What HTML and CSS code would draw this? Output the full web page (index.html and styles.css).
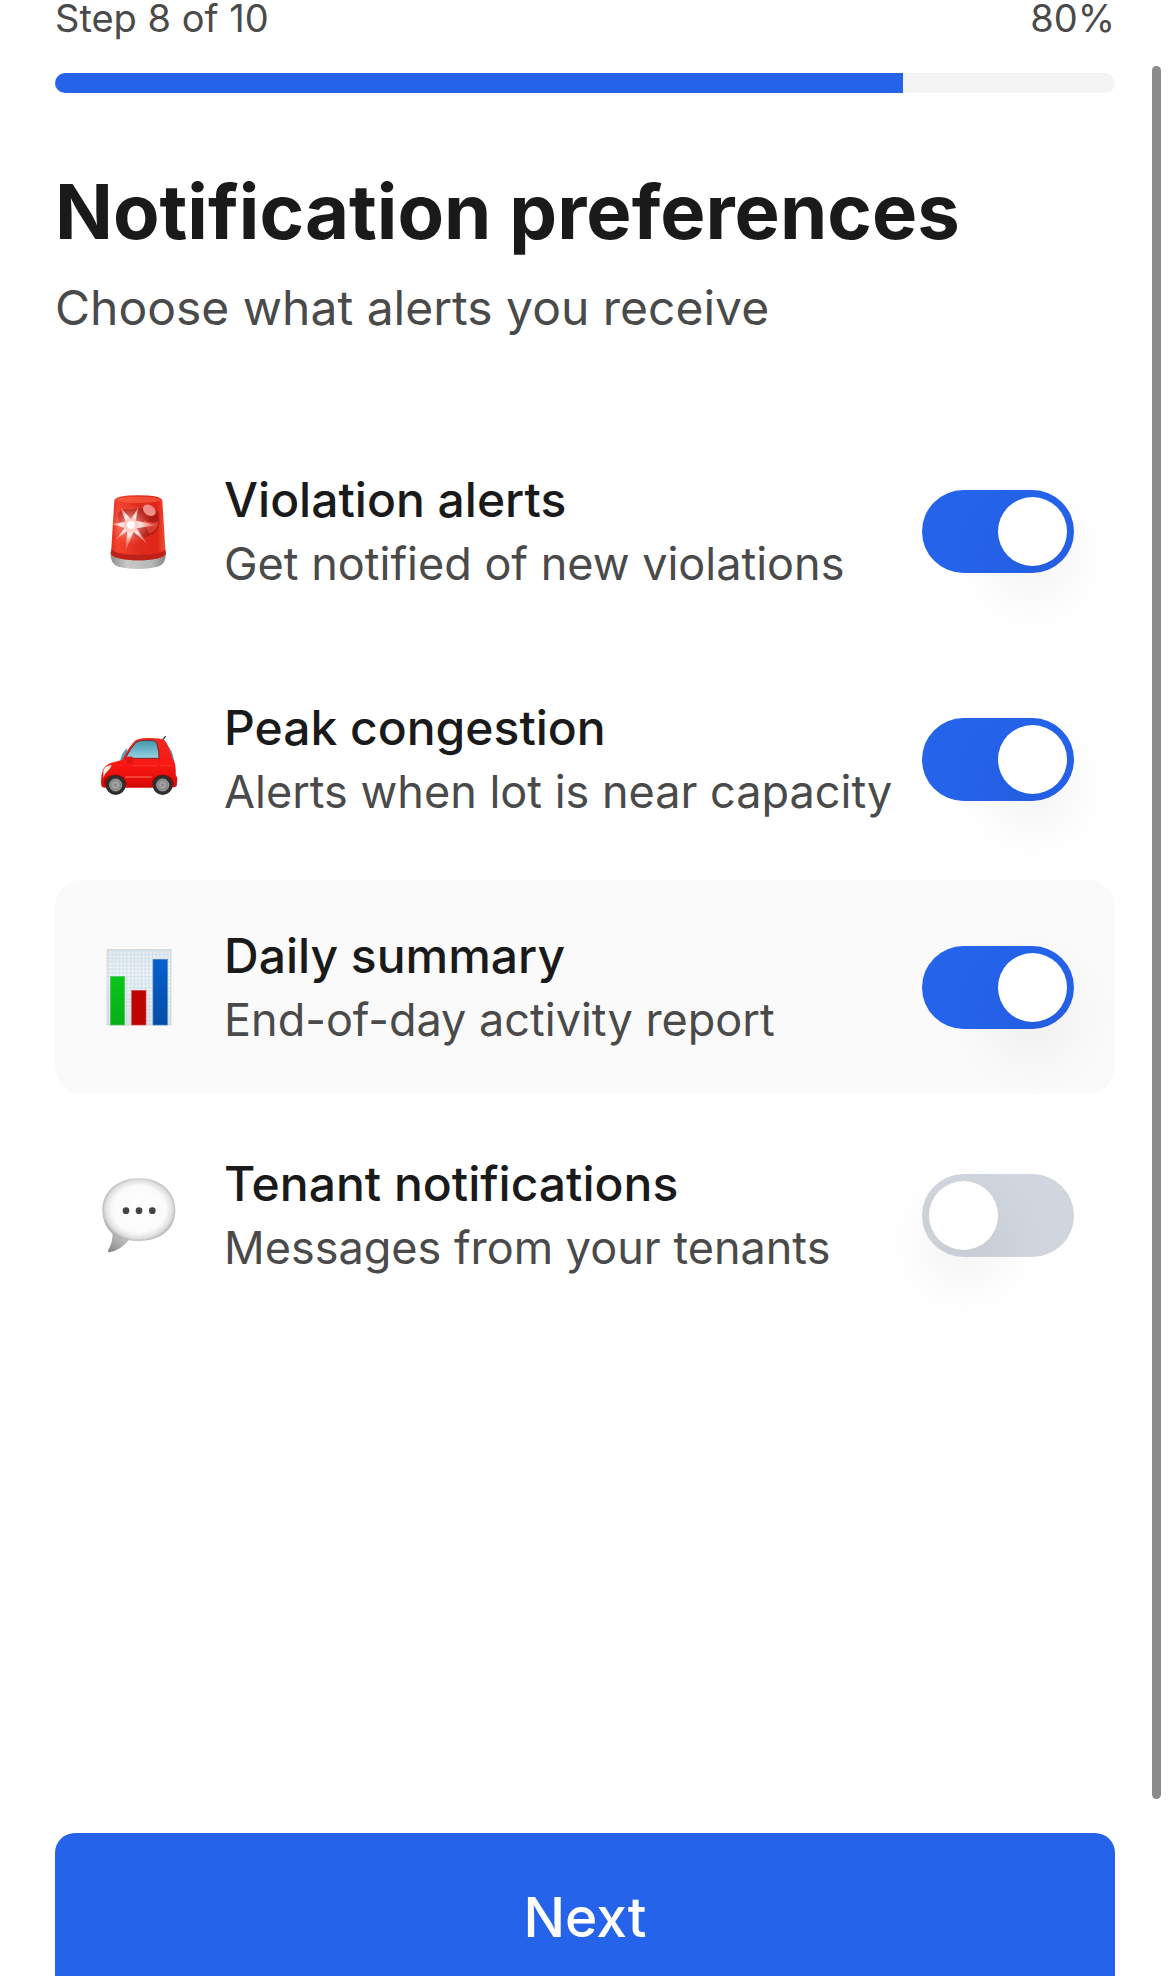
FILE: index.html
```html
<!DOCTYPE html>
<html lang="en">
<head>
    <meta charset="UTF-8">
    <meta name="viewport" content="width=device-width, initial-scale=1.0">
    <title>Notification preferences</title>
    <link rel="stylesheet" href="styles.css">
</head>
<body>
    <main class="page">
        <div class="step">
            <span>Step 8 of 10</span>
            <span>80%</span>
        </div>
        <div class="progress" role="progressbar" aria-valuenow="80" aria-valuemin="0" aria-valuemax="100" aria-label="Setup progress">
            <div class="progress-fill" style="width: 80%"></div>
        </div>

        <h1>Notification preferences</h1>
        <p class="subtitle">Choose what alerts you receive</p>

        <div class="options">
            <label class="option" for="violations">
                <!-- siren -->
                <svg class="icon" viewBox="18 21 264 264" aria-hidden="true">
                    <defs>
                        <linearGradient id="dome" x1="0" x2="1" y1="0" y2="0">
                            <stop offset="0" stop-color="#e02a1a"/>
                            <stop offset=".12" stop-color="#f2442e"/>
                            <stop offset=".5" stop-color="#de2c1e"/>
                            <stop offset=".85" stop-color="#e02617"/>
                            <stop offset="1" stop-color="#f0503a"/>
                        </linearGradient>
                        <linearGradient id="base" x1="0" x2="1" y1="0" y2="0">
                            <stop offset="0" stop-color="#8c8c8c"/>
                            <stop offset=".3" stop-color="#c9c9c9"/>
                            <stop offset=".75" stop-color="#b5b8b8"/>
                            <stop offset="1" stop-color="#858585"/>
                        </linearGradient>
                        <radialGradient id="glow">
                            <stop offset="0" stop-color="#fff"/>
                            <stop offset=".3" stop-color="#ffd8d2" stop-opacity=".9"/>
                            <stop offset="1" stop-color="#ff6a50" stop-opacity="0"/>
                        </radialGradient>
                        <radialGradient id="rays" gradientUnits="userSpaceOnUse" cx="123" cy="135" r="76">
                            <stop offset="0" stop-color="#fff"/>
                            <stop offset=".4" stop-color="#ffe3df"/>
                            <stop offset="1" stop-color="#ff9c8e" stop-opacity=".2"/>
                        </radialGradient>
                    </defs>
                    <path d="M61 216 Q60 252 85 260 Q145 274 204 260 Q229 252 228 216Z" fill="url(#base)"/>
                    <path d="M73 62 Q76 46 145 46 Q214 46 217 62 L227 222 Q215 240 145 241 Q75 240 63 222Z" fill="url(#dome)"/>
                    <path d="M64 208 Q75 224 145 225 Q215 224 226 208 L227 222 Q215 240 145 241 Q75 240 63 222Z" fill="#bd2118"/>
                    <path d="M78 60 Q85 50 145 50 Q205 50 212 60 Q200 69 145 69 Q90 69 78 60Z" fill="#ff6644" opacity=".6"/>
                    <path d="M84 104 Q92 84 120 88 L166 84 Q192 74 205 98 L208 128 Q205 158 180 166 Q150 184 125 164 Q88 158 84 104Z" fill="#9c1512" opacity=".7"/>
                    <ellipse cx="178" cy="91" rx="21" ry="15" fill="#ef8e88" transform="rotate(35 178 91)"/>
                    <path d="M160 120 Q186 132 206 124 Q204 152 178 162Z" fill="#d63c30"/>
                    <circle cx="123" cy="135" r="62" fill="url(#glow)" opacity=".6"/>
                    <path d="M123 118 L145 82 L137 122 L205 135 L139 145 L174 194 L131 155 L106 213 L112 153 L76 180 L104 144 L66 132 L107 125 L92 82Z" fill="url(#rays)"/>
                    <circle cx="123" cy="135" r="26" fill="url(#glow)"/>
                    <circle cx="123" cy="135" r="12" fill="#fff"/>
                </svg>
                <span class="option-text">
                    <span class="option-title">Violation alerts</span>
                    <span class="option-desc">Get notified of new violations</span>
                </span>
                <input class="toggle" type="checkbox" id="violations" checked>
            </label>

            <label class="option" for="congestion">
                <!-- car -->
                <svg class="icon" viewBox="18 0 264 264" aria-hidden="true">
                    <defs>
                        <linearGradient id="paint" x1="0" x2="0" y1="0" y2="1">
                            <stop offset="0" stop-color="#ed2b20"/>
                            <stop offset=".55" stop-color="#fb1713"/>
                            <stop offset="1" stop-color="#d50807"/>
                        </linearGradient>
                        <linearGradient id="glass" x1="0" x2="0" y1="0" y2="1">
                            <stop offset="0" stop-color="#4496ac"/>
                            <stop offset="1" stop-color="#93d3e3"/>
                        </linearGradient>
                        <radialGradient id="wheel">
                            <stop offset="0" stop-color="#777"/>
                            <stop offset=".25" stop-color="#a9a9a9"/>
                            <stop offset=".58" stop-color="#777"/>
                            <stop offset=".66" stop-color="#333"/>
                            <stop offset="1" stop-color="#292929"/>
                        </radialGradient>
                    </defs>
                    <path d="M216 77 L226 65" stroke="#333" stroke-width="4" stroke-linecap="round"/>
                    <path d="M90 138 Q94 114 112 98 L108 136Z" fill="#53a9c0"/>
                    <path d="M226 86 Q249 104 252 136 L257 180 L245 150Z" fill="#4ba5be"/>
                    <path d="M34 212 Q31 184 39 164 Q49 145 76 140 L96 135 Q113 102 132 80 Q142 69 172 69 Q210 68 224 76 Q238 94 248 132 Q258 141 257 178 L262 190 L260 214 Q255 218 240 218 L50 218 Q36 218 34 212Z" fill="url(#paint)"/>
                    <path d="M106 130 Q121 100 137 83 Q146 76 164 76 L188 76 Q199 77 202 90 Q208 112 207 130Z" fill="url(#glass)" stroke="#7a2424" stroke-width="3"/>
                    <path d="M40 178 Q38 166 46 157 Q55 149 65 151 Q60 164 51 170 Q43 177 40 188Z" fill="#fff0ea"/>
                    <path d="M108 129 Q109 124 128 125 L129 143 Q125 149 112 146Z" fill="#dc1612"/>
                    <path d="M106 186 L186 186" stroke="#ff7462" stroke-width="3"/>
                    <path d="M212 152 L248 152 M129 152 L202 152" stroke="#ff3a2a" stroke-width="3"/>
                    <path d="M42 198 Q48 179 77 179 Q106 179 111 210 L44 210Z M185 205 Q190 179 219 179 Q248 179 252 210Z" fill="#9e0606"/>
                    <circle cx="77" cy="210" r="30" fill="url(#wheel)"/>
                    <circle cx="218" cy="210" r="30" fill="url(#wheel)"/>
                    <circle cx="77" cy="210" r="18" fill="none" stroke="#b4b4b4" stroke-width="2"/>
                    <circle cx="218" cy="210" r="18" fill="none" stroke="#b4b4b4" stroke-width="2"/>
                </svg>
                <span class="option-text">
                    <span class="option-title">Peak congestion</span>
                    <span class="option-desc">Alerts when lot is near capacity</span>
                </span>
                <input class="toggle" type="checkbox" id="congestion" checked>
            </label>

            <label class="option active" for="summary">
                <!-- bar chart on graph paper -->
                <svg class="icon" viewBox="18 24 264 264" aria-hidden="true">
                    <defs>
                        <pattern id="grid" x="54" y="46" width="11" height="11" patternUnits="userSpaceOnUse">
                            <path d="M0 2 H11 M2 0 V11" stroke="#bfd9ea" stroke-width="3" opacity=".75"/>
                        </pattern>
                        <linearGradient id="paper" x1="0" x2="0" y1="0" y2="1">
                            <stop offset="0" stop-color="#e6e8ea"/>
                            <stop offset=".3" stop-color="#f5f6f7"/>
                            <stop offset="1" stop-color="#e0e2e4"/>
                        </linearGradient>
                        <linearGradient id="blue" x1="0" x2="0" y1="0" y2="1">
                            <stop offset="0" stop-color="#0560cf"/>
                            <stop offset="1" stop-color="#044da6"/>
                        </linearGradient>
                        <linearGradient id="green" x1="0" x2="0" y1="0" y2="1">
                            <stop offset="0" stop-color="#09c51c"/>
                            <stop offset="1" stop-color="#06af15"/>
                        </linearGradient>
                    </defs>
                    <rect x="51" y="43" width="192" height="227" fill="url(#paper)"/>
                    <rect x="51" y="43" width="192" height="227" fill="url(#grid)"/>
                    <rect x="51" y="43" width="192" height="227" fill="none" stroke="#cfcfcf" stroke-width="2"/>
                    <rect x="61" y="124" width="43" height="146" fill="url(#green)" stroke="#57c763" stroke-width="2"/>
                    <rect x="125" y="166" width="43" height="104" fill="#be0303" stroke="#cf5656" stroke-width="2"/>
                    <rect x="189" y="73" width="43" height="197" fill="url(#blue)" stroke="#4780c2" stroke-width="2"/>
                </svg>
                <span class="option-text">
                    <span class="option-title">Daily summary</span>
                    <span class="option-desc">End-of-day activity report</span>
                </span>
                <input class="toggle" type="checkbox" id="summary" checked>
            </label>

            <label class="option" for="tenants">
                <!-- speech bubble -->
                <svg class="icon" viewBox="18 18 264 264" aria-hidden="true">
                    <defs>
                        <radialGradient id="bubble" gradientUnits="userSpaceOnUse" cx="147" cy="133" r="114" gradientTransform="translate(0 17) scale(1 .87)">
                            <stop offset="0" stop-color="#fff"/>
                            <stop offset=".7" stop-color="#fbfbfb"/>
                            <stop offset=".88" stop-color="#e0e0e0"/>
                            <stop offset="1" stop-color="#aaa"/>
                        </radialGradient>
                        <linearGradient id="tail" x1="1" x2="0" y1="0" y2="1">
                            <stop offset="0" stop-color="#d8d8d8"/>
                            <stop offset="1" stop-color="#858585"/>
                        </linearGradient>
                    </defs>
                    <path d="M68 200 Q68 233 56 252 Q50 262 59 262 Q92 256 120 222Z" fill="url(#tail)"/>
                    <path d="M147 40 C212 40 256 80 256 136 C256 192 212 228 147 228 Q130 228 117 225 Q86 220 68 207 Q37 180 37 136 C37 80 82 40 147 40Z" fill="url(#bubble)"/>
                    <circle cx="108" cy="137" r="10" fill="#444"/>
                    <circle cx="147" cy="137" r="10" fill="#444"/>
                    <circle cx="187" cy="137" r="10" fill="#444"/>
                </svg>
                <span class="option-text">
                    <span class="option-title">Tenant notifications</span>
                    <span class="option-desc">Messages from your tenants</span>
                </span>
                <input class="toggle" type="checkbox" id="tenants">
            </label>
        </div>

        <div class="footer">
            <button class="next" type="button">Next</button>
        </div>
    </main>

    <div class="scrollbar"></div>
</body>
</html>
```
FILE: styles.css
```css
* {
    box-sizing: border-box;
}

body {
    margin: 0;
    background: #fff;
    color: #1a1a1a;
    font-family: Inter, "Liberation Sans", sans-serif;
}

.page {
    display: flex;
    flex-direction: column;
    height: 100vh;
    padding: 0 55px;
    overflow: hidden;
}

/* progress */
.step {
    display: flex;
    justify-content: space-between;
    margin-bottom: 37px;
    color: #4a4a4a;
    font-size: 38px;
    line-height: 36px;
}

.progress {
    flex-shrink: 0;
    height: 20px;
    border-radius: 10px;
    background: #f4f4f4;
    overflow: hidden;
}

.progress-fill {
    height: 100%;
    background: #2563eb;
}

h1 {
    margin: 72px 0 15px;
    font-size: 76px;
    font-weight: 700;
    line-height: 92px;
}

.subtitle {
    margin: 0 0 80px;
    color: #4a4a4a;
    font-size: 48px;
    line-height: 72px;
}

/* options */
.options {
    display: flex;
    flex: 1;
    flex-direction: column;
    gap: 14px;
}

.option {
    display: flex;
    align-items: center;
    padding: 43px 41px;
    border-radius: 27px;
    cursor: pointer;
}

.option.active {
    background: #fafafa;
}

.icon {
    flex-shrink: 0;
    width: 88px;
    height: 88px;
    margin-right: 40px;
}

.option-text {
    flex: 1;
    white-space: nowrap;
}

.option-title,
.option-desc {
    display: block;
}

.option-title {
    font-size: 48px;
    font-weight: 500;
    line-height: 66px;
}

.option-desc {
    color: #4a4a4a;
    font-size: 45px;
    line-height: 62px;
}

.toggle {
    appearance: none;
    flex-shrink: 0;
    width: 152px;
    height: 83px;
    margin: 0;
    padding: 7px;
    border-radius: 42px;
    background: #d1d5dd;
    cursor: pointer;
}

.toggle::before {
    content: "";
    display: block;
    width: 69px;
    height: 69px;
    border-radius: 50%;
    background: #fff;
    box-shadow: 0 27px 60px 0 rgba(0, 0, 0, 0.08);
}

.toggle:checked {
    background: #2563eb;
}

.toggle:checked::before {
    margin-left: auto;
}

/* the button runs past the bottom edge */
.footer {
    flex-shrink: 0;
    height: 143px;
}

.next {
    width: 100%;
    height: 168px;
    border: 0;
    border-radius: 20px;
    background: #2563eb;
    color: #fff;
    font-family: inherit;
    font-size: 55px;
    font-weight: 500;
    cursor: pointer;
}

.scrollbar {
    position: fixed;
    top: 66px;
    right: 9px;
    bottom: 177px;
    width: 9px;
    border-radius: 5px;
    background: #8b8b8b;
}
```
